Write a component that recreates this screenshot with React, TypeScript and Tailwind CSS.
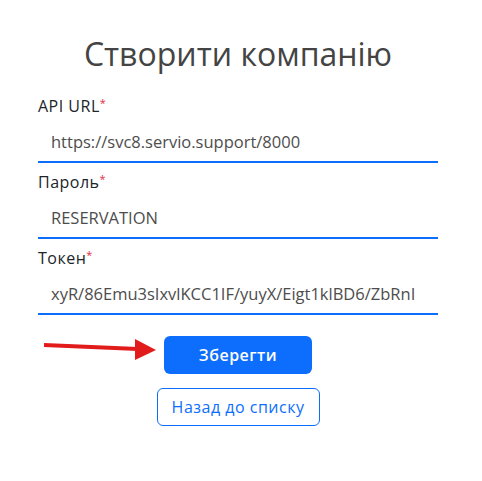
import React from 'react';

const fields = [
  { label: 'API URL', value: 'https://svc8.servio.support/8000' },
  { label: 'Пароль', value: 'RESERVATION' },
  { label: 'Токен', value: 'xyR/86Emu3sIxvlKCC1IF/yuyX/Eigt1klBD6/ZbRnI' },
];

function Field({ label, value }: { label: string; value: string }) {
  return (
    <div className="mb-[9px] last:mb-0">
      <label className="block h-[21px] text-[16px] leading-[21px] tracking-[0.5px] text-[#212529]">
        {label}
        <span className="relative -top-[5px] text-[11px] text-[#e0303e]">*</span>
      </label>
      <input
        readOnly
        value={value}
        className="block h-[46px] w-full border-b-2 border-[#0d6efd] bg-transparent pl-[13px] pr-0 pt-[5px] text-[16.5px] text-[#4d4d4d] outline-none"
      />
    </div>
  );
}

export default function App() {
  return (
    <div
      className="min-h-[481px] w-[482px] bg-white pl-[38px] pt-[33px]"
      style={{ fontFamily: '"Open Sans", "Noto Sans", sans-serif' }}
    >
      <div className="w-[400px]">
        <h1 className="mb-[21px] text-center text-[32px] leading-[42px] font-normal text-[#444444]">
          Створити компанію
        </h1>

        {fields.map((f) => (
          <Field key={f.label} label={f.label} value={f.value} />
        ))}

        <div className="mt-[21px] flex flex-col items-center gap-[14px]">
          <div className="relative">
            {/* red annotation arrow */}
            <svg
              className="absolute right-[calc(100%+6px)] top-[2px]"
              width="114"
              height="24"
              viewBox="0 0 114 24"
            >
              <line x1="0" y1="7" x2="94" y2="11" stroke="#e21b1b" strokeWidth="4" />
              <polygon points="91,1 112,12 91,22" fill="#e21b1b" />
            </svg>
            <button className="h-[38px] w-[148px] rounded-[6px] bg-[#0d6efd] text-[16px] font-semibold tracking-[0.5px] text-white">
              Зберегти
            </button>
          </div>
          <button className="h-[38px] w-[163px] rounded-[6px] border border-[#0d6efd] bg-white text-[16px] tracking-[0.5px] text-[#0d6efd]">
            Назад до списку
          </button>
        </div>
      </div>
    </div>
  );
}
